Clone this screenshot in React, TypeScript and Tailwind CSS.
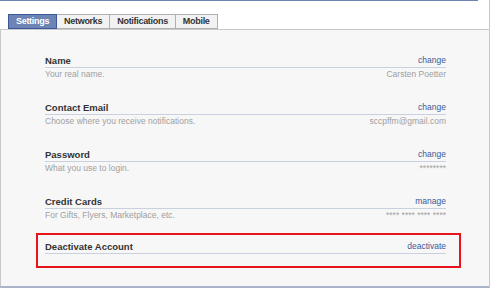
const tabs = ['Settings', 'Networks', 'Notifications', 'Mobile']

const rows = [
  { label: 'Name', action: 'change', hint: 'Your real name.', value: 'Carsten Poetter' },
  { label: 'Contact Email', action: 'change', hint: 'Choose where you receive notifications.', value: 'sccpffm@gmail.com' },
  { label: 'Password', action: 'change', hint: 'What you use to login.', value: '********' },
  { label: 'Credit Cards', action: 'manage', hint: 'For Gifts, Flyers, Marketplace, etc.', value: '**** **** **** ****' },
]

function Row({ label, action, hint, value }: { label: string; action: string; hint?: string; value?: string }) {
  return (
    <div>
      <div className="flex h-[14px] items-end justify-between border-b border-[#c9d0e0] leading-[13px]">
        <span className="text-[9.5px] font-bold text-[#333]">{label}</span>
        <a className="text-[8.5px] text-[#3b5998]">{action}</a>
      </div>
      {hint !== undefined && (
        <div className="flex h-[13px] justify-between text-[8.5px] leading-[13px] text-[#a0a0a0]">
          <span>{hint}</span>
          <span>{value}</span>
        </div>
      )}
    </div>
  )
}

export default function App() {
  return (
    <div className="flex h-[288px] w-[490px] flex-col border-r border-[#c8c8c8] bg-white font-['Liberation_Sans',Arial,sans-serif]">
      <div className="mr-[11px] h-px bg-[#6d84b4]" />
      <div className="flex pl-2 pt-[13px]">
        {tabs.map((t, i) => (
          <div
            key={t}
            className={
              i === 0
                ? 'flex h-[15px] items-center border border-[#3b5998] bg-[#6d84b4] px-[7px] text-[9px] font-bold tracking-[-0.3px] text-white'
                : 'flex h-[15px] items-center border border-l-0 border-[#b0b0b0] bg-[#f2f2f2] px-[7px] text-[9px] font-bold tracking-[-0.3px] text-[#333]'
            }
          >
            {t}
          </div>
        ))}
      </div>
      <div className="flex flex-1 flex-col border-b-2 border-l border-t border-[#c8c8c8] border-b-[#aab3ca] bg-[#f7f7f7] pl-[44px] pr-[43px] pt-[24px]">
        <div className="flex flex-col gap-[20px]">
          {rows.map((r) => (
            <Row key={r.label} {...r} />
          ))}
        </div>
        <div className="-ml-[9px] -mr-[15px] mt-[11px] border-2 border-[#e8141c] pb-[12px] pl-[7px] pr-[13px] pt-[5px]">
          <Row label="Deactivate Account" action="deactivate" />
        </div>
      </div>
    </div>
  )
}
